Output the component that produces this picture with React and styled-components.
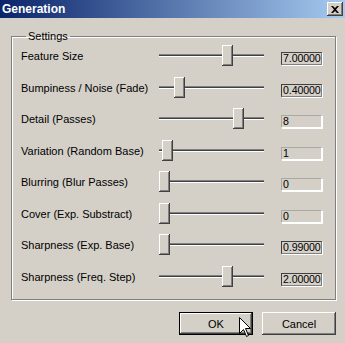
import React from 'react';
import styled, { createGlobalStyle } from 'styled-components';

const GlobalStyle = createGlobalStyle`
  html, body {
    margin: 0;
    padding: 0;
    background: #d4d0c8;
  }
  body {
    font-family: "Liberation Sans", Arial, sans-serif;
    font-size: 11px;
    color: #000;
  }
`;

const settings = [
    { label: 'Feature Size', pos: 63, value: '7.00000', active: true },
    { label: 'Bumpiness / Noise (Fade)', pos: 15, value: '0.40000', active: true },
    { label: 'Detail (Passes)', pos: 74, value: '8' },
    { label: 'Variation (Random Base)', pos: 3, value: '1' },
    { label: 'Blurring (Blur Passes)', pos: 0, value: '0' },
    { label: 'Cover (Exp. Substract)', pos: 0, value: '0' },
    { label: 'Sharpness (Exp. Base)', pos: 0, value: '0.99000', active: true },
    { label: 'Sharpness (Freq. Step)', pos: 63, value: '2.00000', active: true },
];

const Dialog = styled.div`
    position: relative;
    width: 345px;
    height: 343px;
    background: #d4d0c8;
    display: flex;
    flex-direction: column;
    overflow: hidden;
`

const TitleBar = styled.div`
    height: 18px;
    display: flex;
    align-items: center;
    justify-content: space-between;
    padding: 0 2px 0 2px;
    background: linear-gradient(to right, #0a246a, #a6caf0);
`

const Title = styled.span`
    color: #fff;
    font-weight: bold;
    font-size: 12px;
    line-height: 18px;
`

const CloseButton = styled.div`
    width: 16px;
    height: 14px;
    display: flex;
    align-items: center;
    justify-content: center;
    background: #d4d0c8;
    box-shadow: inset -1px -1px 0 #404040, inset 1px 1px 0 #fff, inset -2px -2px 0 #808080;
`

const Group = styled.fieldset`
    margin: 12px 9px 0 11px;
    padding: 0 13px 4px 9px;
    border: 1px solid #808080;
    box-shadow: inset 1px 1px 0 #fff, 1px 1px 0 #fff;
`

const Legend = styled.legend`
    padding: 0 2px;
    margin-left: 5px;
    line-height: 13px;
`

const Row = styled.div`
    height: 31.5px;
    display: grid;
    grid-template-columns: 138px 105px 41px;
    align-items: start;
    & > :last-child { margin-left: 17px; }
`

const Label = styled.span`
    margin-top: 7px;
    line-height: 13px;
    white-space: nowrap;
`

const Slider = styled.div`
    position: relative;
    margin-top: 2px;
    height: 21px;
`

const Channel = styled.div`
    position: absolute;
    left: 0;
    right: 0;
    top: 9px;
    height: 3px;
    background: #404040;
    border-top: 1px solid #808080;
    border-bottom: 1px solid #fff;
    box-sizing: border-box;
`

const Thumb = styled.div`
    position: absolute;
    top: 0;
    width: 11px;
    height: 21px;
    box-sizing: border-box;
    background: #d4d0c8;
    box-shadow: inset -1px -1px 0 #404040, inset 1px 1px 0 #fff, inset -2px -2px 0 #808080;
`

const ValueBox = styled.div`
    margin-top: 9px;
    width: 41px;
    height: 13px;
    box-sizing: border-box;
    padding: 0 0 0 1px;
    font-size: 10.6px;
    letter-spacing: -0.1px;
    line-height: 11px;
    border: 1px solid ${p => p.$active ? '#404040' : '#aaa8a2'};
    border-right-color: ${p => p.$active ? '#808080' : '#fff'};
    border-bottom-color: ${p => p.$active ? '#808080' : '#fff'};
    box-shadow: 1px 1px 0 #fff;
    white-space: nowrap;
    overflow: hidden;
`

const Buttons = styled.div`
    display: flex;
    justify-content: flex-end;
    gap: 9px;
    margin: 12px 9px 0 0;
`

const Button = styled.div`
    width: 74px;
    height: 23px;
    box-sizing: border-box;
    display: flex;
    align-items: center;
    justify-content: center;
    background: #d4d0c8;
    box-shadow: ${p => p.$default
        ? 'inset 0 0 0 1px #000, inset -2px -2px 0 #404040, inset 2px 2px 0 #fff, inset -3px -3px 0 #808080'
        : 'inset -1px -1px 0 #404040, inset 1px 1px 0 #fff, inset -2px -2px 0 #808080'};
`

const Cursor = styled.svg`
    position: absolute;
    left: 239px;
    top: 317px;
`

const Generation = () => {
    return (
        <Dialog>
            <GlobalStyle />
            <TitleBar>
                <Title>Generation</Title>
                <CloseButton>
                    <svg width="8" height="7" viewBox="0 0 8 7">
                        <path d="M0 0h2l2 2 2-2h2L5 3.5 8 7H6L4 5 2 7H0l3-3.5z" fill="#000" />
                    </svg>
                </CloseButton>
            </TitleBar>

            <Group>
                <Legend>Settings</Legend>
                {settings.map(s => (
                    <Row key={s.label}>
                        <Label>{s.label}</Label>
                        <Slider>
                            <Channel />
                            <Thumb style={{ left: s.pos }} />
                        </Slider>
                        <ValueBox $active={s.active}>{s.value}</ValueBox>
                    </Row>
                ))}
            </Group>

            <Buttons>
                <Button $default>OK</Button>
                <Button>Cancel</Button>
            </Buttons>

            <Cursor width="13" height="21" viewBox="0 0 13 21">
                <path d="M0.5 0.5V16.5L4.5 12.5L7.5 19.5L9.5 18.5L6.5 11.5H11.5Z" fill="#fff" stroke="#000" strokeWidth="1" />
            </Cursor>
        </Dialog>
    )
}

export default Generation
